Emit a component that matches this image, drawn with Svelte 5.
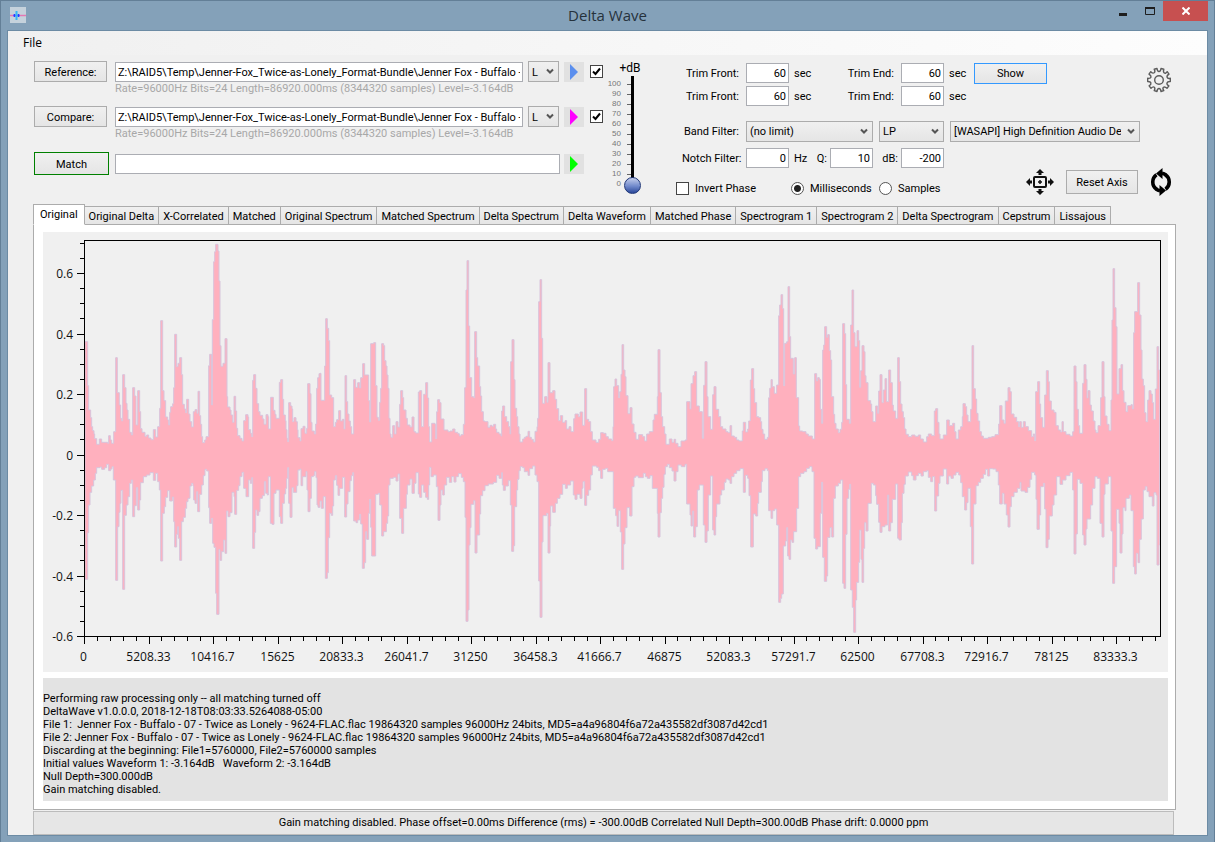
<script>
	let sources = $state([
		{ id: 'reference', label: 'Reference:', path: 'Z:\\RAID5\\Temp\\Jenner-Fox_Twice-as-Lonely_Format-Bundle\\Jenner Fox - Buffalo - 07 - Twice as Lonely', info: 'Rate=96000Hz Bits=24 Length=86920.000ms (8344320 samples) Level=-3.164dB', color: '#5b8fee', on: true },
		{ id: 'compare', label: 'Compare:', path: 'Z:\\RAID5\\Temp\\Jenner-Fox_Twice-as-Lonely_Format-Bundle\\Jenner Fox - Buffalo - 07 - Twice as Lonely', info: 'Rate=96000Hz Bits=24 Length=86920.000ms (8344320 samples) Level=-3.164dB', color: '#ff00ff', on: true }
	]);
	let gain = $state(0);
	let unit = $state('ms');
	let activeTab = $state('Original');

	const gainMarks = [100, 90, 80, 70, 60, 50, 40, 30, 20, 10, 0];

	const tabs = [
		'Original', 'Original Delta', 'X-Correlated', 'Matched', 'Original Spectrum',
		'Matched Spectrum', 'Delta Spectrum', 'Delta Waveform', 'Matched Phase',
		'Spectrogram 1', 'Spectrogram 2', 'Delta Spectrogram', 'Cepstrum', 'Lissajous'
	];

	const log = `Performing raw processing only -- all matching turned off
DeltaWave v1.0.0.0, 2018-12-18T08:03:33.5264088-05:00
File 1:  Jenner Fox - Buffalo - 07 - Twice as Lonely - 9624-FLAC.flac 19864320 samples 96000Hz 24bits, MD5=a4a96804f6a72a435582df3087d42cd1
File 2: Jenner Fox - Buffalo - 07 - Twice as Lonely - 9624-FLAC.flac 19864320 samples 96000Hz 24bits, MD5=a4a96804f6a72a435582df3087d42cd1
Discarding at the beginning: File1=5760000, File2=5760000 samples
Initial values Waveform 1: -3.164dB   Waveform 2: -3.164dB
Null Depth=300.000dB
Gain matching disabled.`;

	// Peak envelope, stored in blocks. Every "x,y" holds its level until the next x,
	// dx / topDy / lowDy move a block into chart space (3 units per chart pixel).
	const blocks = [
		{
			dx: -39, topDy: -21, lowDy: 669,
			top: '165,350 173,482 176,555 182,578 185,605 188,617 192,627 194,641 200,658 208,642 215,652 233,655 236,632 241,645 245,655 251,620 257,398 262,503 268,540 272,580 275,588 278,449 284,488 288,535 291,555 294,583 299,622 304,630 308,488 314,513 318,600 323,497 329,560 332,611 336,622 345,634 350,630 356,639 363,644 370,614 377,636 383,605 389,550 392,287 398,497 402,527 407,576 413,585 416,600 419,562 422,545 428,536 431,488 434,328 440,425 444,415 449,398 455,449 458,538 463,552 467,563 470,523 476,567 480,590 485,606 490,560 495,554 501,565 504,499 509,572 512,598 515,635 518,653 524,645 528,635 536,422 539,388 545,540 547,284 551,110 554,80 557,58 564,78 567,168 570,362 573,424 579,415 585,341 591,515 593,546 600,555 603,570 608,592 612,514 617,558 620,610 623,632 630,640 636,648 641,587 647,569 654,576 656,614 662,625 665,635 668,466 671,449 677,490 681,536 686,560 690,571 698,582 702,598 708,569 714,575 716,612 722,517 730,556 735,568 738,580 748,472 752,464 758,523 761,570 766,587 768,614 771,640 773,650 776,533 782,543 786,552 788,590 792,578 798,590 802,614 804,638 810,648 813,611 819,604 825,625 830,610 833,476 840,506 843,592 846,618 853,627 857,597 860,490 863,458 867,446',
			low: '165,373 173,233 176,150 180,112 185,93 191,75 196,55 200,38 210,36 215,43 224,38 230,28 236,47 242,42 246,35 250,75 257,376 263,215 267,172 270,145 273,106 278,403 284,181 289,150 294,125 299,85 304,75 308,185 314,152 319,98 323,165 329,135 332,83 340,65 350,60 360,53 370,76 377,55 383,80 388,105 392,318 398,175 403,155 407,127 413,107 419,138 427,126 431,200 434,276 440,238 443,215 445,250 449,316 455,200 460,187 466,160 470,140 474,130 480,93 485,85 489,93 491,135 495,145 500,110 503,170 509,118 515,90 520,62 525,43 530,48 536,158 539,205 545,190 548,265 552,277 557,415 560,478 567,283 570,316 575,290 581,255 585,295 590,168 594,185 600,173 606,112 612,125 614,178 620,106 626,92 630,65 636,52 641,100 648,125 656,75 661,85 665,68 668,280 674,232 677,165 681,181 686,170 690,130 697,122 703,80 707,115 712,120 715,65 721,205 726,208 732,115 738,105 748,185 752,205 758,145 763,117 767,100 770,70 773,38 776,145 780,187 786,98 790,112 800,92 804,45 810,42 813,92 818,65 828,50 831,105 834,170 840,130 844,65 850,62 854,50 858,68 861,150 864,157'
		},
		{
			dx: 831, topDy: -6, lowDy: -6,
			top: '0,430 3,511 14,408 17,266 22,295 26,332 29,495 35,503 41,590 46,577 50,569 56,542 62,573 67,568 72,597 75,437 80,515 83,552 87,573 91,590 95,612 101,449 107,472 113,458 119,474 122,443 128,401 134,435 146,512 149,576 152,341 161,338 167,467 171,562 175,571 179,517 182,475 185,341 191,347 194,392 198,408 201,435 204,475 207,565 210,612 213,622 218,587 224,612 228,575 234,591 239,523 242,482 248,503 251,540 258,565 262,585 270,591 276,561 282,605 287,609 295,486 299,482 305,590 311,493 317,458 323,504 326,590 329,636 335,580 345,583 347,626 350,545 353,509 359,518 363,567 372,600 384,605 390,603 398,597 405,607 413,611 418,618 423,614 430,583 434,473 438,180 441,92 446,288 449,443 455,500 461,503 464,305 470,383 473,408 479,470 482,498 485,545 490,573 495,575 504,592 510,586 516,589 521,583 527,597 530,607 537,612 543,618 545,543 548,528 554,560 560,575 566,590 570,612 572,395 576,329 582,449 585,535 590,560 593,590 597,612 600,636 608,627 613,622 618,619 624,604 629,622 634,628 640,636 645,604 651,590 653,565 656,215 660,149 665,325 668,520 674,500 681,517 684,398 690,488 698,482 705,508 710,536 716,572 721,557 728,577 735,572 740,597 747,590 753,605 761,566 765,552 775,560 780,546 788,586 794,476 800,568 806,575 812,605 817,630 828,637 836,628 842,608 850,610 858,620 865,627 875,632 879,590 881,470 885,447 890,467 896,503 899,485 903,433 906,344 911,420 915,440 918,497 924,551 930,533 936,582 942,607 948,628 956,614 968,620 974,633 980,612 988,605 996,605 999,570 1003,553 1012,500 1014,359 1020,488 1024,560 1028,590 1034,612 1038,643 1048,627 1056,637 1062,628 1067,640 1074,650 1083,633 1095,630 1100,515 1110,537 1113,461 1119,437 1124,425 1130,528 1138,545 1147,625 1151,466 1155,395 1161,500 1164,560 1172,598 1178,494 1182,470 1188,538 1196,560 1202,590 1208,597 1218,605 1224,608',
			low: '0,813 4,835 10,800 16,1045 22,1028 25,923 29,850 34,856 38,828 41,750 46,737 50,766 54,796 59,775 68,742 74,861 80,822 84,785 90,752 94,737 98,728 101,873 108,878 113,870 119,853 122,882 127,1015 133,998 137,905 140,928 146,850 149,808 152,892 155,978 167,793 175,790 179,825 185,918 191,905 199,880 203,858 206,765 210,745 220,742 228,753 234,732 239,865 245,910 251,835 259,793 262,765 270,747 276,790 283,760 288,728 295,792 299,802 305,765 311,787 317,802 322,808 326,765 329,712 333,740 340,735 349,770 354,871 360,825 363,780 368,795 373,765 380,742 388,757 395,740 402,756 408,740 415,731 424,742 430,755 435,862 438,1174 444,1140 447,945 450,893 453,823 461,812 465,969 471,915 479,852 482,797 488,782 495,767 505,762 520,757 530,736 537,745 545,728 547,765 550,781 556,768 565,752 571,825 575,964 581,947 584,830 590,780 593,748 597,722 601,710 608,713 613,725 624,736 629,716 638,708 645,735 651,755 656,1053 660,1162 666,936 669,857 680,850 684,969 690,888 692,828 698,847 706,820 712,805 720,793 728,763 736,775 742,765 752,753 760,795 765,808 771,793 780,805 786,775 789,755 794,826 800,796 806,780 812,735 817,708 830,712 836,722 842,745 848,718 856,715 863,725 880,835 887,857 891,889 896,842 901,906 905,1018 911,942 915,893 921,833 929,858 936,770 942,742 947,738 955,743 970,730 976,740 982,745 990,737 997,775 1012,850 1014,921 1020,848 1024,805 1028,772 1032,733 1036,710 1042,703 1048,713 1056,723 1062,753 1068,725 1074,705 1084,710 1095,703 1100,822 1110,855 1113,888 1118,843 1121,921 1127,890 1132,780 1138,765 1150,885 1155,937 1161,903 1165,795 1172,738 1178,900 1182,915 1187,860 1190,822 1200,795 1205,780 1213,757 1218,747 1225,750'
		},
		{
			dx: 2061, topDy: -6, lowDy: -6,
			top: '0,587 5,618 13,622 20,630 27,633 37,603 40,577 47,606 53,597 56,573 61,450 65,416 71,476 74,518 80,560 86,563 92,575 95,598 99,612 104,628 112,622 116,503 119,475 123,449 127,470 133,490 140,465 146,257 149,225 153,194 158,236 161,467 164,340 170,335 174,170 179,320 182,385 190,432 194,383 199,503 206,588 209,603 218,605 228,612 235,618 247,627 254,431 260,453 263,443 268,448 271,538 275,580 278,360 281,345 284,290 290,322 293,314 298,362 302,390 305,500 311,553 314,580 318,597 325,608 330,598 335,577 338,281 344,311 347,464 350,568 358,580 362,285 366,180 371,308 375,350 381,302 386,332 389,472 392,422 396,347 402,365 405,437 408,458 414,512 422,522 425,545 429,575 437,528 443,550 446,483 450,434 456,518 460,480 465,446 470,515 476,420 482,458 487,525 490,543 497,565 503,383 508,455 512,522 516,545 520,563 524,597 528,613 535,620 545,615 555,619 565,615 572,627 580,636 590,620 595,612 605,617 613,543 617,536 623,577 627,612 630,627 640,615 650,570 658,587 668,580 674,605 678,627 685,600 692,590 697,560 699,521 706,530 710,555 714,575 722,538 726,347 731,476 736,507 740,550 744,573 749,605 754,618 760,625 775,622 785,620 795,614 806,582 809,527 816,570 822,580 826,513 834,473 840,485 844,552 852,562 860,575 866,590 869,575 874,592 880,575 886,590 895,602 905,620 910,612 914,632 917,485 923,455 929,522 932,563 938,592 944,495 949,422 955,455 958,513 964,540 972,547 978,587 985,600 992,606 996,575 1000,605 1008,613 1020,618 1028,605 1032,408 1038,455 1041,538 1045,587 1049,610 1058,460 1062,404 1068,448 1071,504 1074,482 1080,525 1084,543 1090,573 1095,600 1098,608 1104,587 1112,503 1116,395 1122,500 1125,558 1131,583 1137,602 1143,510 1146,270 1149,116 1154,233 1158,290 1161,492 1167,416 1173,404 1178,482 1182,517 1188,545 1193,527 1203,524 1207,537 1211,308 1214,245 1223,158 1229,255 1233,360 1236,447 1240,467 1244,548 1248,575 1253,510 1257,482 1263,492 1267,518 1271,568 1276,477 1281,350 1286,420 1289,420',
			low: '0,760 5,740 12,730 20,722 30,716 40,787 46,736 53,745 57,797 62,951 70,852 77,858 83,820 86,787 94,755 97,722 105,716 112,722 116,842 123,865 128,842 134,837 140,885 146,1117 152,1105 155,1092 160,948 167,933 170,893 173,978 177,988 182,930 186,937 191,905 200,835 206,740 212,730 222,725 230,715 238,710 246,725 252,925 257,957 263,950 271,850 275,757 278,982 283,1054 290,1038 293,922 300,893 305,921 311,805 316,768 325,760 332,750 338,1060 342,1075 347,913 351,805 356,778 359,763 362,1080 367,1132 371,1207 377,1110 380,1057 386,997 389,900 393,988 396,1057 401,955 404,878 408,903 414,820 424,760 430,765 437,797 440,823 446,877 450,907 456,890 465,885 473,795 476,903 482,878 487,808 497,762 503,925 507,930 514,878 517,790 522,763 526,738 535,726 545,737 550,750 558,737 565,730 573,738 580,725 590,722 595,742 602,755 608,740 614,843 620,798 626,760 630,738 640,717 650,762 656,738 663,745 670,735 678,727 686,735 692,758 697,800 704,840 710,818 714,775 721,890 725,1002 731,822 738,767 745,757 752,745 760,733 767,718 773,738 779,716 788,717 798,725 805,765 809,822 817,790 822,822 829,855 834,891 840,830 844,800 852,787 862,775 870,757 873,783 885,787 893,772 900,748 905,727 914,735 918,808 921,898 928,855 932,770 940,760 944,837 948,953 954,928 958,858 967,825 972,795 980,740 990,763 998,750 1008,737 1020,727 1028,780 1032,972 1038,912 1042,748 1050,760 1058,915 1062,945 1068,897 1071,867 1077,867 1082,825 1088,775 1095,740 1102,745 1110,880 1116,921 1122,793 1125,762 1135,740 1143,903 1148,1060 1154,1010 1160,838 1167,880 1170,969 1176,912 1179,833 1185,842 1188,805 1198,795 1203,842 1210,1010 1214,1032 1219,970 1224,998 1229,928 1234,867 1240,780 1246,770 1251,785 1257,800 1267,828 1272,788 1278,795 1281,1005 1287,945 1289,945'
		}
	];

	function steps(key, dyKey) {
		return blocks.flatMap((b) =>
			b[key].split(' ').map((pair) => {
				const [x, y] = pair.split(',').map(Number);
				return [x + b.dx, y + b[dyKey]];
			})
		);
	}

	function wavePath() {
		const top = steps('top', 'topDy');
		const low = steps('low', 'lowDy');
		let d = `M${top[0][0]} 668`;
		for (const [x, y] of top) d += `H${x}V${y}`;
		// walk back along the lower edge, drawing each level before the drop to the previous one
		for (let i = low.length - 1; i >= 0; i--) d += `V${low[i][1]}H${low[i][0]}`;
		return d + 'Z';
	}

	const wave = wavePath();

	// plot area inside the chart
	const plot = { x: 41.5, y: 8.5, w: 1076, h: 396 };
	const bottom = plot.y + plot.h;
	const yTicks = Array.from({ length: 27 }, (_, i) => ({
		y: Math.round(bottom - i * 15.125 - 0.5) + 0.5,
		major: i % 4 === 0,
		label: String(Math.round((-0.6 + i * 0.05) * 10) / 10)
	}));
	const xNames = ['0', '5208.33', '10416.7', '15625', '20833.3', '26041.7', '31250', '36458.3', '41666.7', '46875', '52083.3', '57291.7', '62500', '67708.3', '72916.7', '78125', '83333.3'];
	const xTicks = Array.from({ length: 84 }, (_, i) => ({
		x: Math.round(plot.x + i * 12.9 - 0.5) + 0.5,
		major: i % 5 === 0,
		label: xNames[i / 5]
	}));
</script>

<svelte:head><title>Delta Wave</title></svelte:head>

{#snippet play(color, label)}
	<button class="play" type="button" aria-label={label}>
		<svg width="8" height="16" viewBox="0 0 8 16"><path d="M0 0L8 8L0 16Z" fill={color} /></svg>
	</button>
{/snippet}

{#snippet trim(n)}
	<label class="lead" for="front{n}">Trim Front:</label>
	<input class="box num" id="front{n}" value="60" />
	<span class="unit">sec</span>
	<label class="trim-end" for="end{n}">Trim End:</label>
	<input class="box num" id="end{n}" value="60" />
	<span class="unit short">sec</span>
{/snippet}

<div class="window">
	<header class="titlebar">
		<svg class="app-icon" width="16" height="16" viewBox="0 0 16 16">
			<rect width="16" height="16" fill="#c5d2dc" />
			<path d="M0 8.500H16" stroke="#e478b4" stroke-width="1.500" />
			<path d="M3 8.500H10" stroke="#6a4dff" stroke-width="2" />
			<path d="M6.500 4V13" stroke="#35b8f5" stroke-width="2" />
			<path d="M4.500 7V10M8.500 7V10" stroke="#1b46ff" stroke-width="1" />
		</svg>
		<h1>Delta Wave</h1>
		<div class="caption">
			<button type="button" aria-label="Minimize"><svg width="10" height="10" viewBox="0 0 10 10"><path d="M1 8.500H9" stroke="#1e1e1e" stroke-width="3" /></svg></button>
			<button type="button" aria-label="Maximize"><svg width="10" height="8" viewBox="0 0 10 8"><path d="M.5 1H9.500V7.500H.5Z" fill="none" stroke="#1e1e1e" /><path d="M0 1H10" stroke="#1e1e1e" stroke-width="2" /></svg></button>
			<button class="close" type="button" aria-label="Close"><svg width="8" height="8" viewBox="0 0 8 8"><path d="M.5 .5L7.500 7.500M7.500 .5L.5 7.500" stroke="#fff" stroke-width="2" /></svg></button>
		</div>
	</header>

	<div class="client">
		<nav class="menu"><button type="button">File</button></nav>

		<div class="controls">
			<div class="sources">
				{#each sources as source (source.id)}
					<div class="source">
						<button class="btn" type="button">{source.label}</button>
						<div class="file">
							<input class="box path" aria-label={source.label} bind:value={source.path} />
							<div class="info">{source.info}</div>
						</div>
						<select class="channel" aria-label="Channel"><option>L</option><option>R</option></select>
						{@render play(source.color, 'Play ' + source.id)}
						<input class="check" type="checkbox" aria-label="Use {source.id}" bind:checked={source.on} />
					</div>
				{/each}
				<div class="source last">
					<button class="btn match" type="button">Match</button>
					<input class="box path result" aria-label="Match result" />
					{@render play('#00ff00', 'Play match')}
				</div>
			</div>

			<div class="gain">
				<label for="gain">+dB</label>
				<div class="gain-body">
					<div class="marks">
						{#each gainMarks as mark}<span>{mark}</span>{/each}
					</div>
					<input id="gain" type="range" min="0" max="100" bind:value={gain} />
				</div>
			</div>

			<div class="options">
				<div class="upper">
					<div class="filters">
						<div class="row">{@render trim(1)}<button class="btn show" type="button">Show</button></div>
						<div class="row">{@render trim(2)}</div>
						<div class="row band">
							<label class="lead" for="band">Band Filter:</label>
							<select class="limit" id="band"><option>(no limit)</option></select>
							<select class="pass" aria-label="Filter type"><option>LP</option><option>HP</option></select>
							<select class="device" aria-label="Audio device"><option>[WASAPI] High Definition Audio De</option></select>
						</div>
						<div class="row">
							<label class="lead" for="notch">Notch Filter:</label>
							<input class="box num" id="notch" value="0" />
							<span class="unit hz">Hz</span>
							<label class="q" for="q">Q:</label>
							<input class="box num" id="q" value="10" />
							<label class="db" for="depth">dB:</label>
							<input class="box num" id="depth" value="-200" />
						</div>
					</div>
					<button class="icon gear" type="button" aria-label="Settings">
						<svg width="26" height="26" viewBox="0 0 26 26" fill="none" stroke="#5c5c5c" stroke-width="1.400" stroke-linejoin="round">
							<path d="M11 1.500Q11.300 4.500 13 4.500T15 1.500L17.800 2.200Q16.900 5 18.300 6T21.200 4.700L23 7.200Q20.600 8.600 21.100 10.300T24.300 11.300V14.500Q21.500 14.300 21 16T22.900 18.900L21 21.300Q18.800 19.300 17.500 20.300T17.800 23.700L15 24.500Q14.700 21.500 13 21.500T11 24.500L8.200 23.700Q9.500 21.200 8.300 20.200T5 21.300L3.100 18.900Q5.300 17.500 4.900 16T1.700 14.500V11.300Q4.700 11.700 5 10.200T3 7.200L4.800 4.700Q6.800 6.800 8.200 5.800T8.200 2.200Z" />
							<circle cx="13" cy="13" r="4.300" />
						</svg>
					</button>
				</div>
				<div class="lower">
					<label class="invert"><input class="check" type="checkbox" />Invert Phase</label>
					<label class="radio"><input type="radio" name="unit" value="ms" bind:group={unit} />Milliseconds</label>
					<label class="radio"><input type="radio" name="unit" value="samples" bind:group={unit} />Samples</label>
					<div class="axis">
						<button class="icon" type="button" aria-label="Fit to window">
							<svg width="28" height="26" viewBox="0 0 28 26">
								<rect x="8" y="8" width="12" height="10" rx="1" fill="none" stroke="#111" stroke-width="2" />
								<path d="M12 13H16M14 11V15" stroke="#111" stroke-width="1.500" />
								<path d="M14 0L18 4H15.500V6H12.500V4H10ZM14 26L10 22H12.500V20H15.500V22H18ZM0 13L4 9V11.500H6V14.500H4V17ZM28 13L24 17V14.500H22V11.500H24V9Z" fill="#111" />
							</svg>
						</button>
						<button class="btn reset" type="button">Reset Axis</button>
						<button class="icon" type="button" aria-label="Refresh">
							<svg width="22" height="28" viewBox="0 0 22 28">
								<path d="M6.500 21.200A8.800 8.800 0 0 1 6.500 6.800M15.500 6.800A8.800 8.800 0 0 1 15.500 21.200" fill="none" stroke="#000" stroke-width="3.600" />
								<path d="M12 5.300A8.800 8.800 0 0 1 16 7.200M10 22.700A8.800 8.800 0 0 1 6 20.800" fill="none" stroke="#000" stroke-width="3.600" />
								<path d="M12.500 0V11L6 5.500ZM9.500 17V28L16 22.500Z" fill="#000" />
							</svg>
						</button>
					</div>
				</div>
			</div>
		</div>

		<div class="tabs" role="tablist">
			{#each tabs as tab}
				<button type="button" role="tab" class:active={tab === activeTab} aria-selected={tab === activeTab} onclick={() => (activeTab = tab)}>{tab}</button>
			{/each}
		</div>

		<main class="page">
			<svg class="chart" viewBox="0 0 1125 440" role="img" aria-label="Waveform">
				<g transform="scale(.33333)"><path class="wave" d={wave} /></g>
				<rect class="axis-line" x={plot.x} y={plot.y} width={plot.w} height={plot.h} />
				{#each yTicks as t}
					<path class="axis-line" d="M{t.major ? 34 : 37} {t.y}H41" />
					{#if t.major}<text x="30" y={t.y + 4} text-anchor="end">{t.label}</text>{/if}
				{/each}
				{#each xTicks as t}
					<path class="axis-line" d="M{t.x} 405V{t.major ? 412 : 409}" />
					{#if t.major}<text x={t.x - 1} y="429" text-anchor="middle">{t.label}</text>{/if}
				{/each}
			</svg>
			<pre class="log">{log}</pre>
		</main>

		<footer class="status">Gain matching disabled. Phase offset=0.00ms Difference (rms) = -300.00dB Correlated Null Depth=300.00dB Phase drift: 0.0000 ppm</footer>
	</div>
</div>

<style>
	:global(body) {
		margin: 0;
	}

	.window,
	.window :global(*) {
		box-sizing: border-box;
	}

	.window {
		min-height: 100vh;
		display: flex;
		flex-direction: column;
		padding: 0 6px 6px;
		background: #84a1b9;
		border: 1px solid #637f97;
		color: #000;
		font-family: Roboto, 'Liberation Sans', sans-serif;
		font-size: 11px;
		line-height: 13px;
	}

	button,
	input,
	select {
		margin: 0;
		font: inherit;
		color: inherit;
	}

	button {
		padding: 0;
		border: none;
		background: none;
	}

	svg {
		display: block;
	}

	.titlebar {
		display: grid;
		grid-template-columns: 1fr auto 1fr;
		height: 29px;
	}

	.app-icon {
		margin: 6px 0 0 3px;
	}

	h1 {
		margin: 0;
		font: 15px/29px 'Open Sans', sans-serif;
		color: #26323c;
	}

	.caption {
		display: flex;
		justify-content: flex-end;
		height: 20px;
	}

	.caption button {
		display: flex;
		align-items: center;
		justify-content: center;
		width: 27px;
	}

	.caption .close {
		width: 45px;
		background: #c75050;
	}

	.client {
		flex: 1;
		display: flex;
		flex-direction: column;
		background: #f0f0f0;
		border: 1px solid #6c8ba4;
	}

	.menu {
		height: 24px;
		padding: 5px 15px;
		background: linear-gradient(90deg, #f0f0f0, #fdfdfd);
		font-family: 'Open Sans', sans-serif;
		font-size: 12px;
	}

	.controls {
		display: flex;
		padding: 6px 35px 0 26px;
		height: 149px;
	}

	.sources {
		flex: 1;
		min-width: 0;
	}

	.source {
		display: grid;
		grid-template-columns: 73px 1fr 31px 20px 13px;
		column-gap: 5px;
		align-items: start;
		height: 45px;
	}

	.source .file {
		margin: 1px 0 0 3px;
		min-width: 0;
	}

	.source .check {
		margin: 4px 0 0 1px;
	}

	.source.last {
		grid-template-columns: 75px 1fr 20px 13px;
		padding-top: 1px;
	}

	.btn {
		height: 21px;
		padding-top: 1px;
		background: linear-gradient(#f0f0f0, #e5e5e5);
		border: 1px solid #acacac;
	}

	.btn.match {
		height: 23px;
		border-color: #008000;
	}

	.box {
		height: 20px;
		padding: 1px 2px 0;
		background: #fff;
		border: 1px solid #abadb3;
		border-radius: 0;
		outline: none;
	}

	.path {
		display: block;
		width: 100%;
	}

	.result {
		margin-left: 1px;
		margin-top: 2px;
	}

	.info {
		color: #a8a8a8;
		white-space: nowrap;
	}

	select {
		height: 21px;
		padding: 1px 18px 0 3px;
		appearance: none;
		border: 1px solid #acacac;
		border-radius: 0;
		background:
			url("data:image/svg+xml,%3Csvg xmlns='http://www.w3.org/2000/svg' width='8' height='7'%3E%3Cpath d='M1 1.500L4 4.500L7 1.500' fill='none' stroke='%23555' stroke-width='2'/%3E%3C/svg%3E") no-repeat right 4px center,
			linear-gradient(#f0f0f0, #e5e5e5);
	}

	.play {
		display: flex;
		align-items: center;
		justify-content: center;
		width: 20px;
		height: 20px;
		margin-top: 1px;
		background: #e1e1e1;
	}

	.last .play {
		margin-top: 2px;
	}

	.check {
		appearance: none;
		flex: none;
		width: 13px;
		height: 13px;
		background: #fff;
		border: 1px solid #444;
	}

	.check:checked {
		background: #fff url("data:image/svg+xml,%3Csvg xmlns='http://www.w3.org/2000/svg' width='9' height='9'%3E%3Cpath d='M1 4.500L3.500 7L8 1.500' fill='none' stroke='%23000' stroke-width='2'/%3E%3C/svg%3E") no-repeat center;
	}

	.gain {
		width: 46px;
		text-align: center;
	}

	.gain label {
		display: block;
		padding-left: 10px;
		font-size: 12px;
		line-height: 15px;
	}

	.gain-body {
		display: flex;
		justify-content: flex-end;
		margin-right: 7px;
	}

	.marks {
		flex: 1;
		display: flex;
		flex-direction: column;
		padding-top: 3px;
		color: #777;
		font: 8px/10px 'Liberation Sans', sans-serif;
	}

	.marks span {
		padding-right: 11px;
		background: linear-gradient(#666, #666) no-repeat right center / 5px 1px;
		text-align: right;
	}

	#gain {
		appearance: none;
		writing-mode: vertical-lr;
		direction: rtl;
		width: 17px;
		height: 118px;
		margin-left: -8px;
		background: linear-gradient(#000, #000) no-repeat center top / 3px 110px;
	}

	#gain::-webkit-slider-thumb {
		appearance: none;
		width: 17px;
		height: 17px;
		border: 1px solid #1f3778;
		border-radius: 50%;
		background: linear-gradient(#c3cdeb, #7089cb 55%, #2b489a);
	}

	.options {
		flex: none;
		width: 496px;
		margin-left: 28px;
	}

	.upper {
		display: flex;
		justify-content: space-between;
		padding: 2px 0 0 6px;
	}

	.row {
		display: flex;
		align-items: center;
		height: 20px;
		margin-bottom: 3px;
	}

	.row label {
		text-align: right;
		white-space: nowrap;
	}

	.lead {
		width: 57px;
		margin-right: 7px;
	}

	.num {
		width: 43px;
		text-align: right;
	}

	.unit {
		width: 50px;
		padding-left: 5px;
	}

	.unit.short {
		width: 30px;
	}

	.unit.hz {
		width: 24px;
	}

	.trim-end {
		width: 55px;
		margin-right: 7px;
	}

	.q {
		width: 14px;
		margin-right: 3px;
	}

	.db {
		width: 25px;
		margin-right: 3px;
	}

	.btn.show {
		width: 73px;
		border-color: #3399ff;
	}

	.band {
		margin: 15px 0 7px;
	}

	.limit {
		width: 127px;
	}

	.pass {
		width: 65px;
		margin: 0 6px;
	}

	.device {
		width: 190px;
	}

	.icon svg {
		margin: auto;
	}

	.gear {
		align-self: flex-start;
		margin-top: 4px;
	}

	.lower {
		display: flex;
		align-items: flex-start;
	}

	.lower label {
		display: flex;
		align-items: center;
		gap: 6px;
		margin-top: 11px;
	}

	.invert {
		width: 115px;
	}

	.radio {
		width: 88px;
	}

	.radio input {
		appearance: none;
		width: 13px;
		height: 13px;
		border: 1px solid #555;
		border-radius: 50%;
		background: #fff;
	}

	.radio input:checked {
		background: radial-gradient(circle, #222 3px, #fff 4px);
	}

	.axis {
		flex: 1;
		display: flex;
		align-items: center;
		justify-content: flex-end;
		gap: 12px;
		margin-top: -3px;
	}

	.reset {
		width: 72px;
		height: 24px;
	}

	.tabs {
		display: flex;
		align-items: flex-end;
		height: 21px;
		padding-left: 25px;
		position: relative;
	}

	.tabs button {
		height: 19px;
		padding: 1px 4px 0;
		margin-right: -1px;
		border: 1px solid #acacac;
		background: linear-gradient(#f0f0f0, #e5e5e5);
		white-space: nowrap;
	}

	.tabs .active {
		height: 21px;
		padding: 0 6px 1px;
		background: #fff;
		border-bottom-color: #fff;
		z-index: 1;
	}

	.page {
		flex: 1;
		margin: -1px 31px 0 25px;
		padding: 7px 7px 8px 9px;
		display: flex;
		flex-direction: column;
		gap: 6px;
		background: #fff;
		border: 1px solid #acacac;
	}

	.chart {
		width: 100%;
		background: #f0f0f0;
	}

	.wave {
		fill: #ffb0be;
		stroke: #d8c4dc;
		stroke-width: 3;
	}

	.axis-line {
		fill: none;
		stroke: #000;
	}

	.chart text {
		font: 12px 'Open Sans', sans-serif;
		fill: #111;
	}

	.log {
		flex: 1;
		margin: 0;
		padding: 14px 0 5px;
		background: #e3e3e3;
		font: inherit;
		overflow: hidden;
	}

	.status {
		height: 24px;
		margin: 1px 33px 0 25px;
		border: 1px solid #bcbcbc;
		background: #e6e6e6;
		text-align: center;
		line-height: 22px;
	}
</style>
